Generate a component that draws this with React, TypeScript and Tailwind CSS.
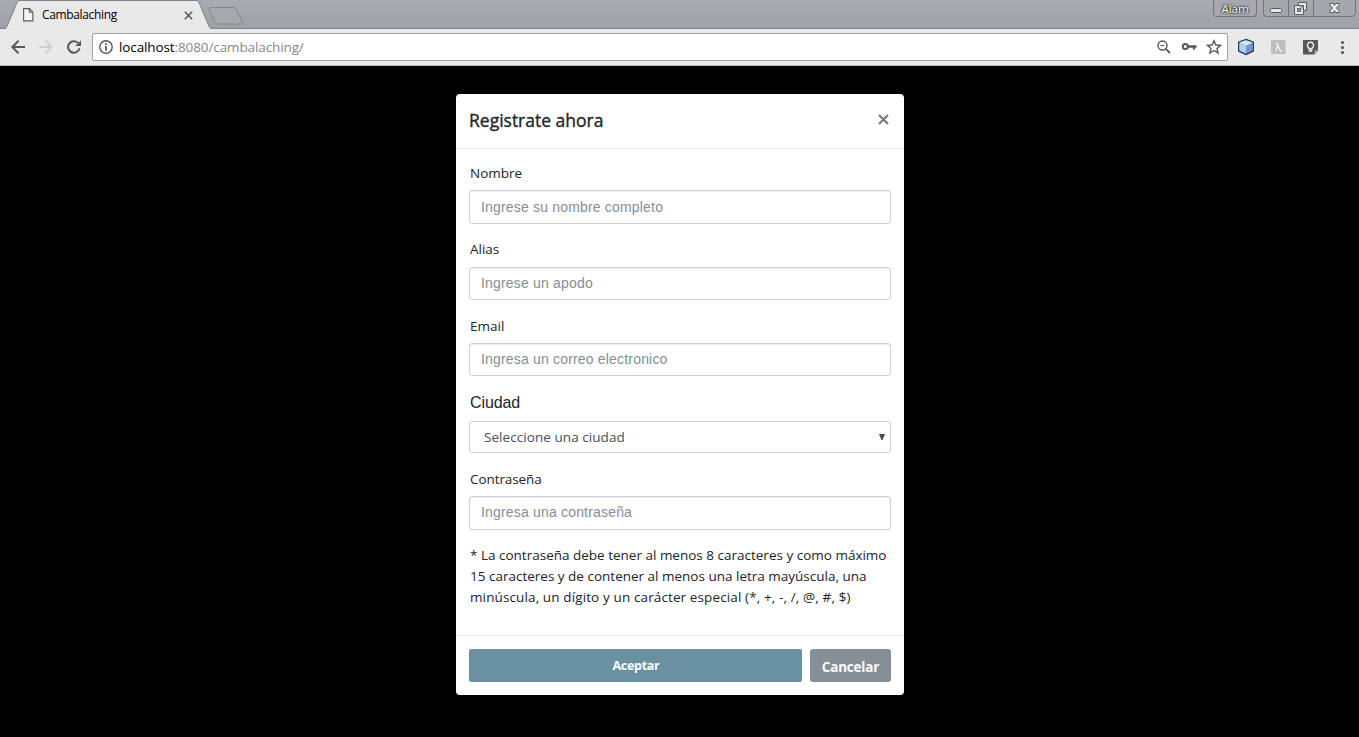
import React from "react";

function TextField({ id, label, placeholder, type = "text", labelClass = "leading-[22px]", inputClass }: {
  id: string; label: string; placeholder: string; type?: string; labelClass?: string; inputClass: string;
}) {
  return (
    <div className="mb-[15px]">
      <label htmlFor={id} className={`block h-7 pl-px text-[13.500px] ${labelClass}`}>
        {label}
      </label>
      <input
        id={id}
        type={type}
        placeholder={placeholder}
        className={`block w-full rounded-[3px] border border-[#ced2da] bg-white px-[11px] font-['Liberation_Sans',sans-serif] text-[14px] tracking-[0.180px] shadow-[inset_0_1px_1px_rgba(0,0,0,0.075)] outline-none placeholder:text-[#868e96] ${inputClass}`}
      />
    </div>
  );
}

function TabStrip() {
  return (
    <header className="relative flex h-[29px] items-start justify-between bg-linear-to-b from-[#aaabb0] to-[#a0a1a8]">
      <svg className="absolute inset-0 h-[29px] w-full" viewBox="0 0 1359 29" preserveAspectRatio="xMinYMin slice" fill="none">
        <path d="M0 28.5H1359" stroke="#84858c" />
        <path d="M5 29C7 28 8 25 9 22L16.500 4C17.300 2 18 .5 20 .5H196C198 .5 198.700 2 199.500 4L207 22C208 25 209 28 212 29Z" fill="#e9e9e9" />
        <path d="M0 28.500H4C6.500 28.500 7.500 25 9 21.500L16.500 3.500C17.300 1.500 18 .5 20 .5H196C198 .5 198.700 1.500 199.500 3.500L207 21.500C208.500 25 209 28.500 212 28.500" stroke="#808188" />
        <path d="M211 7.500H233C235 7.500 236 8.500 237 10.500L242 21.500C243 23.500 242 24 240.500 24H218C216 24 215 23 214 21L209.500 10.500C208.700 8.500 209 7.500 211 7.500Z" fill="#a7a8ac" stroke="#85868c" />
      </svg>
      <div className="relative flex h-7 items-center pt-[2px] pl-[23px]">
        <svg className="size-[14px]" viewBox="0 0 14 14" fill="#f4f4f4" stroke="#58585a" strokeWidth="1.100">
          <path d="M.6.600H6.500L9.900 4.100V12.900H.6ZM6.300.600V4.300H9.900" />
        </svg>
        <span className="ml-[5px] w-[142px] font-['Open_Sans',sans-serif] text-[12px] tracking-[-0.350px] text-black">Cambalaching</span>
        <svg className="size-[9px]" viewBox="0 0 9 9" stroke="#555" strokeWidth="1.500">
          <path d="M.8.800 8.200 8.200M8.200.800.8 8.200" />
        </svg>
      </div>
      <div className="relative flex items-start pr-[3px] text-white">
        <div className="mr-[6px] flex h-[17px] w-[44px] items-center justify-center rounded-b-[4px] border border-t-0 border-[#74757b] bg-[#a7a8ad] pt-px font-['Open_Sans',sans-serif] text-[11.500px] [text-shadow:0_0_1px_#222,0_0_2px_#222,0_0_3px_#333]">
          Alam
        </div>
        <svg className="h-[18px] w-[93px]" viewBox="0 0 93 18" fill="none">
          <path d="M.5 0V13Q.5 16.500 4 16.500H89Q92.500 16.500 92.500 13V0M25.500 0V16.500M50.500 0V16.500" fill="#a5a6ab" stroke="#74757b" />
          <rect x="7.500" y="8.500" width="11" height="4" rx="1" fill="#e8e8e8" stroke="#595a60" />
          <path d="M35.500 2.500H43.500V10.500H40.500V14.500H31.500V5.500H35.500Z" fill="#e8e8e8" stroke="#595a60" />
          <path d="M35.500 5.500H40.500V10.500M34.500 8.500H37.500V11.500H34.500Z" fill="#a5a6ab" stroke="#595a60" />
          <path d="M66.500 3.500H70.500L71.500 5.500 72.500 3.500H76.500V4.500L73.500 8 76.500 11.500V12.500H72.500L71.500 10.500 70.500 12.500H66.500V11.500L69.500 8 66.500 4.500Z" fill="#ececec" stroke="#595a60" />
        </svg>
      </div>
    </header>
  );
}

function Toolbar() {
  return (
    <nav className="flex h-[37px] items-center border-b border-[#b8b8b8] bg-[#e9e9e9]">
      <svg className="ml-[10px] h-4 w-[73px] shrink-0" viewBox="0 0 73 16" fill="none" strokeWidth="2">
        <path d="M15 8H2.500M8.500 1.800 2.300 8 8.500 14.200" stroke="#58585a" />
        <path d="M29 8H41.500M35.500 1.800 41.700 8 35.500 14.200" stroke="#cfcfcf" />
        <path d="M69.500 9.300A5.800 5.800 0 1 1 68 3.900" stroke="#58585a" />
        <path d="M71 1.200V7H65.200Z" fill="#58585a" />
      </svg>
      <div className="ml-[9px] flex h-7 w-[1136px] shrink-0 items-center rounded-[2px] border border-[#a0a0a2] bg-white pl-[6px]">
        <svg className="size-[14px]" viewBox="0 0 14 14" fill="none" stroke="#58585a">
          <circle cx="7" cy="7" r="6.200" strokeWidth="1.400" />
          <path d="M7 6V10.700M7 3.200V4.900" strokeWidth="1.700" />
        </svg>
        <span className="ml-[6px] font-['Open_Sans',sans-serif] text-[13.500px] tracking-[-0.110px] text-[#888]">
          <span className="text-black">localhost</span>:8080/cambalaching/
        </span>
        <svg className="mr-[5px] ml-auto h-4 w-[66px]" viewBox="0 0 66 16" fill="none" stroke="#58585a">
          <circle cx="6.500" cy="6.500" r="4.500" strokeWidth="1.400" />
          <path d="M4.300 6.500H8.700" />
          <path d="M9.800 9.800 14 14" strokeWidth="1.800" />
          <circle cx="29.300" cy="7.500" r="2.600" strokeWidth="2" />
          <path d="M32 7.500H40.500M38 7.500V10.500" strokeWidth="2.300" />
          <path d="M58 1.800 59.900 6 64.500 6.400 61 9.400 62.100 14 58 11.500 53.900 14 55 9.400 51.500 6.400 56.100 6Z" strokeWidth="1.400" />
        </svg>
      </div>
      <svg className="ml-[9px] h-[18px] w-[112px] shrink-0" viewBox="0 0 112 18">
        <path d="M9 1.500 16.300 4.200V13L9 16.500 1.700 13V4.200Z" fill="#8fb4dc" stroke="#263467" strokeWidth="1.400" />
        <path d="M9 2.300 15.500 4.600 9 7.600 2.500 4.600Z" fill="#d5ecec" />
        <path d="M2.500 5 8.700 7.800V15.600L2.500 12.600Z" fill="#afd0f0" />
        <path d="M9.300 7.800 15.500 5V12.600L9.300 15.600Z" fill="#7394cb" />
        <rect x="34" y="2" width="14.500" height="14" rx="1" fill="#bdbdbd" />
        <path d="M38.500 5.500H40L43.500 13H45M40.900 8.300 38.500 13" fill="none" stroke="#f5f5f5" strokeWidth="1.300" />
        <path d="M66 2H81V12.500L77.500 16.500H66Z" fill="#58585a" />
        <path d="M77.500 16.500V12.500H81Z" fill="#a5a5a5" />
        <path d="M72 11V10A3.100 3.100 0 1 1 75 10V11Z" fill="none" stroke="#fff" strokeWidth="1.300" />
        <path d="M71.800 13H75.200" stroke="#fff" strokeWidth="1.500" />
        <g fill="#58585a"><circle cx="105.500" cy="4.500" r="1.600" /><circle cx="105.500" cy="9.500" r="1.600" /><circle cx="105.500" cy="14.500" r="1.600" /></g>
      </svg>
    </nav>
  );
}

function RegisterDialog() {
  return (
    <section role="dialog" className="mt-7 h-[601px] w-[448px] rounded-[4px] bg-white text-[#212529]">
      <div className="flex h-[55px] justify-between border-b border-[#e9ecef] pr-[15px] pl-[13px]">
        <h5 className="pt-[13px] text-[17.500px] leading-[26px] font-medium [-webkit-text-stroke:0.35px_#212529]">Registrate ahora</h5>
        <button type="button" aria-label="Cerrar" className="flex h-[51px] items-center">
          <svg className="size-[11px]" viewBox="0 0 11 11" stroke="#7b7b7b" strokeWidth="2.200">
            <path d="M1 1 10 10M10 1 1 10" />
          </svg>
        </button>
      </div>
      <form className="h-[486px] px-[13px] pt-[13px]">
        <TextField id="nombre" label="Nombre" placeholder="Ingrese su nombre completo" inputClass="h-[34px]" />
        <TextField id="alias" label="Alias" placeholder="Ingrese un apodo" labelClass="leading-[20px]" inputClass="h-[33px] pb-[2px]" />
        <TextField id="email" label="Email" placeholder="Ingresa un correo electronico" inputClass="h-[33px] pb-[2px]" />
        <div className="mb-[15px] pt-px">
          <label htmlFor="ciudad" className="block h-[29px] pl-px font-['Liberation_Sans',sans-serif] text-[16px] leading-[22px] tracking-[-0.100px]">Ciudad</label>
          <div className="flex h-8 items-center rounded-[3px] border border-[#ced2da] pr-[5px]">
            <select id="ciudad" className="h-full flex-1 appearance-none pt-px pl-[14px] text-[13.500px] tracking-[0.060px] text-[#495057] outline-none">
              <option>Seleccione una ciudad</option>
            </select>
            <svg className="h-[6px] w-[6px]" viewBox="0 0 6 6" fill="#43494f"><path d="M0 0H6L3.500 6H2.500Z" /></svg>
          </div>
        </div>
        <TextField id="clave" label="Contraseña" placeholder="Ingresa una contraseña" labelClass="leading-[22px] tracking-[-0.080px]" inputClass="h-[34px] pb-[2px]" />
        <p className="pl-px text-[13.500px] leading-[21px] whitespace-nowrap">
          * La contraseña debe tener al menos 8 caracteres y como máximo<br />
          15 caracteres y de contener al menos una letra mayúscula, una<br />
          <span className="tracking-[0.120px]">minúscula, un dígito y un carácter especial (*, +, -, /, @, #, $)</span>
        </p>
      </form>
      <div className="flex h-[60px] gap-2 border-t border-[#e9ecef] px-[13px] pt-[13px] font-bold text-white">
        <button type="button" className="h-[33px] w-[333px] rounded-[2px] bg-[#6991a2] pt-px pl-px text-[12.500px] tracking-[-0.300px]">Aceptar</button>
        <button type="button" className="h-[33px] w-[81px] rounded-[3px] bg-[#868e96] pt-[4px] text-[13.500px] tracking-[-0.200px]">Cancelar</button>
      </div>
    </section>
  );
}

export default function App() {
  return (
    <div className="flex h-[737px] w-[1359px] flex-col overflow-hidden bg-black font-['Open_Sans',sans-serif]">
      <TabStrip />
      <Toolbar />
      <main className="flex flex-1 justify-center pl-px">
        <RegisterDialog />
      </main>
    </div>
  );
}
